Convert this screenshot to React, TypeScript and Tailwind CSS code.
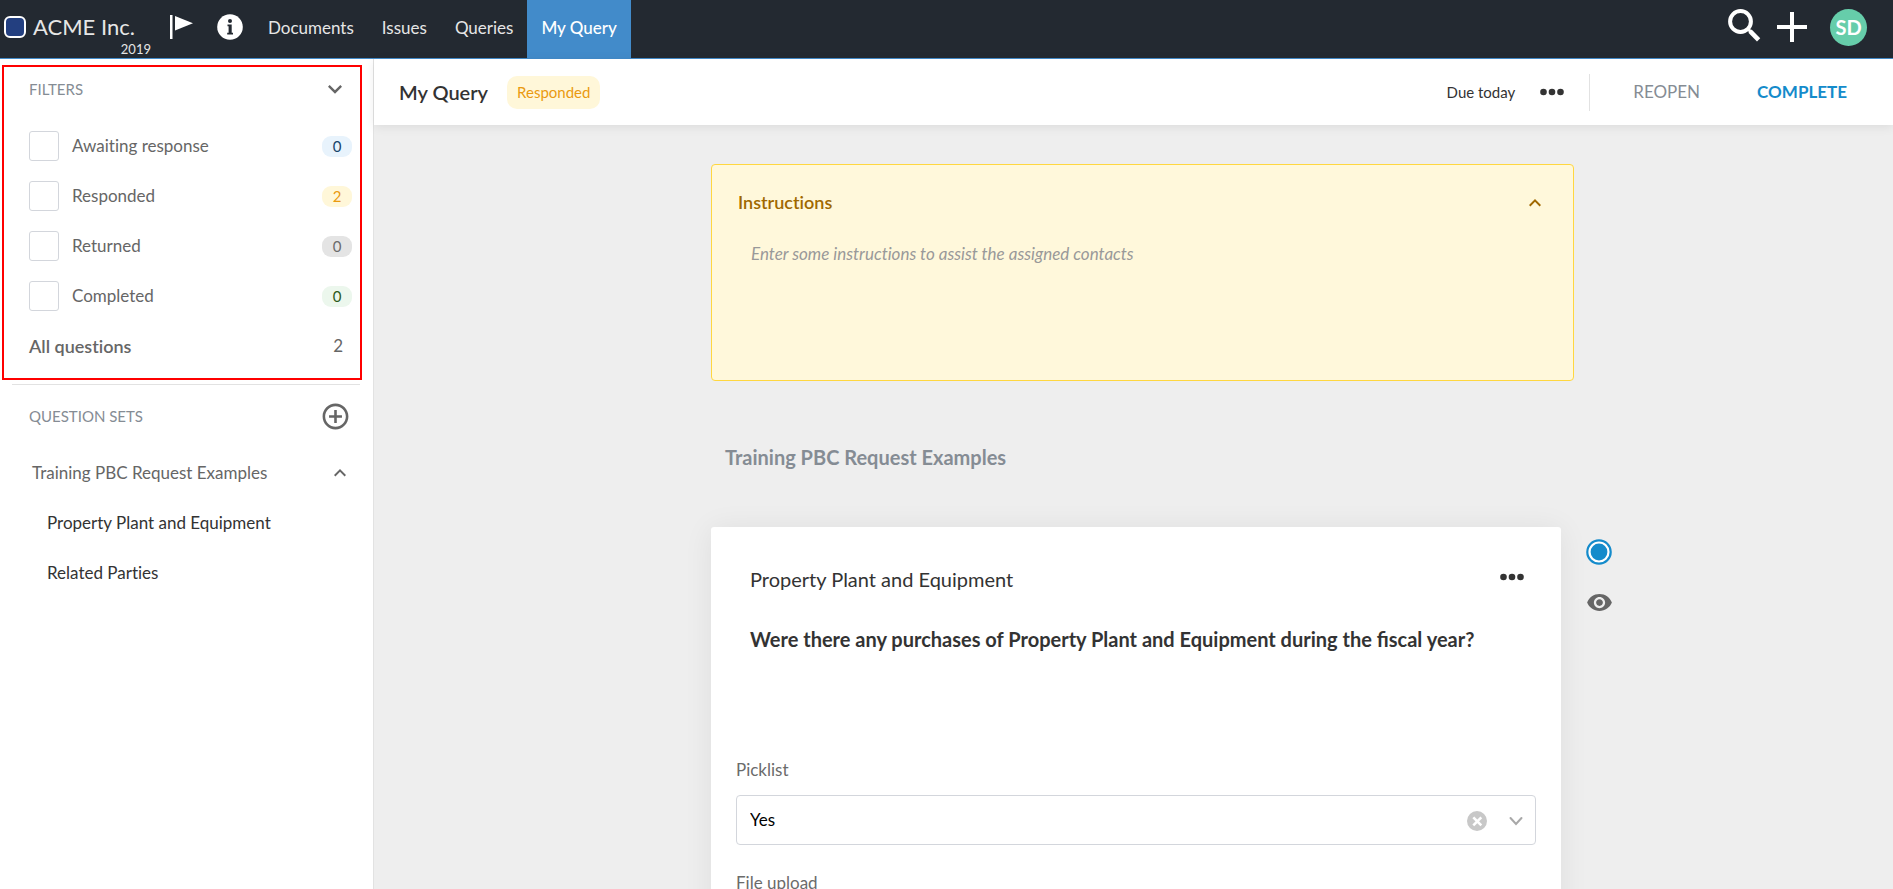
import { useState } from "react";
import {
  MdControlPoint,
  MdExpandLess,
  MdExpandMore,
  MdVisibility,
} from "react-icons/md";

const NAV = ["Documents", "Issues", "Queries", "My Query"];

const FILTERS = [
  { id: "awaiting", label: "Awaiting response", count: 0, badge: "bg-[#e8f3fc] text-[#17456b]" },
  { id: "responded", label: "Responded", count: 2, badge: "bg-[#fff7d9] text-[#ea9a10]" },
  { id: "returned", label: "Returned", count: 0, badge: "bg-[#e4e4e4] text-[#6b6b6b]" },
  { id: "completed", label: "Completed", count: 0, badge: "bg-[#ecf7ed] text-[#2c5a1c]" },
];

const QUESTIONS = ["Property Plant and Equipment", "Related Parties"];

function Dots() {
  return (
    <svg width="24" height="8" viewBox="0 0 24 8" fill="#333" aria-hidden="true">
      <circle cx="3.5" cy="4" r="3.3" />
      <circle cx="12" cy="4" r="3.3" />
      <circle cx="20.5" cy="4" r="3.3" />
    </svg>
  );
}

function TopBar() {
  return (
    <header className="flex h-[59px] shrink-0 items-stretch border-b border-[#428bca] bg-[#232931] text-[#e6e6e6]">
      <a href="#home" className="flex w-[151px] flex-col pt-3 pl-1">
        <span className="flex items-center gap-[7px] text-[22px] leading-[30px]">
          <span className="h-[22px] w-[22px] rounded-[6px] border-2 border-white bg-[#233f80]" />
          ACME Inc.
        </span>
        <span className="self-end text-[13px] leading-[14px]">2019</span>
      </a>
      <button type="button" aria-label="Flag" className="ml-[18px] flex h-[54px] items-center">
        <svg width="25" height="24" viewBox="0 0 25 24" fill="#fff">
          <rect x="1" y="0" width="2.5" height="24" />
          <path d="M6 1L24 8.3L6 15.6Z" />
        </svg>
      </button>
      <button type="button" aria-label="Information" className="ml-[23px] flex h-[54px] items-center">
        <svg width="26" height="26" viewBox="0 0 26 26">
          <circle cx="13" cy="13" r="12.8" fill="#fff" />
          <circle cx="13" cy="7" r="2" fill="#232931" />
          <path d="M10.5 10.5h4.2v8.3h1.3v1.7h-5.8v-1.7h1.4v-6.6h-1.1z" fill="#232931" />
        </svg>
      </button>
      <nav className="ml-[11px] flex text-[17px]">
        {NAV.map((item) => (
          <a
            key={item}
            href="#nav"
            className={
              item === "My Query"
                ? "flex items-center bg-[#428bca] px-[14px] pb-[3px] font-medium text-white"
                : "flex items-center px-[14px] pb-[3px]"
            }
          >
            {item}
          </a>
        ))}
      </nav>
      <div className="ml-auto flex h-[54px] items-center pr-[26px]">
        <button type="button" aria-label="Search" className="pb-[3px]">
          <svg width="33" height="33" viewBox="0 0 33 33" fill="none" stroke="#fff">
            <circle cx="12.5" cy="12.5" r="10.4" strokeWidth="4" />
            <path d="M20 20l3 3" strokeWidth="3" />
            <path d="M22 22.2l8.6 8.6" strokeWidth="4.6" />
          </svg>
        </button>
        <button type="button" aria-label="Add" className="ml-4">
          <svg width="30" height="30" viewBox="0 0 30 30" fill="#fff">
            <path d="M13 0h4v13h13v4H17v13h-4V17H0v-4h13z" />
          </svg>
        </button>
        <button
          type="button"
          className="ml-[23px] h-[37px] w-[37px] rounded-full bg-[#66cdaa] text-[20px] font-bold text-white"
        >
          SD
        </button>
      </div>
    </header>
  );
}

function Sidebar() {
  return (
    <aside className="w-[374px] shrink-0 overflow-hidden border-r border-[#e2e2e2] bg-white text-[17px] text-[#666]">
      <section className="mt-[6px] mr-[11px] ml-[2px] border-2 border-[#f00] pr-2 pb-[7px] pl-[25px]">
        <div className="mb-[10px] flex h-[44px] items-center justify-between pr-[3px]">
          <h2 className="text-[15px] text-[#858c94]">FILTERS</h2>
          <button type="button" aria-label="Collapse filters">
            <MdExpandMore size={28} />
          </button>
        </div>
        {FILTERS.map((f) => (
          <div key={f.id} className="flex h-[50px] items-center">
            <input
              id={f.id}
              type="checkbox"
              className="h-[30px] w-[30px] appearance-none rounded-[3px] border border-[#d3d6dc] bg-white checked:bg-[#428bca]"
            />
            <label htmlFor={f.id} className="ml-[13px] flex-1">
              {f.label}
            </label>
            <span className={`flex h-[21px] w-[30px] items-center justify-center rounded-[9px] text-[15px] ${f.badge}`}>
              {f.count}
            </span>
          </div>
        ))}
        <div className="flex h-[50px] items-center justify-between pr-[9px]">
          <span className="text-[18px] font-semibold">All questions</span>
          <span>2</span>
        </div>
      </section>

      <section className="mt-1 mr-[13px] ml-3 border-t border-[#e2e2e2] pl-[17px]">
        <div className="flex h-[62px] items-center justify-between pr-[9px]">
          <h2 className="text-[15px] text-[#858c94]">QUESTION SETS</h2>
          <button type="button" aria-label="Add question set">
            <MdControlPoint size={31} />
          </button>
        </div>
        <button type="button" className="flex h-[51px] w-full items-center justify-between pr-2 pl-[3px]">
          <span>Training PBC Request Examples</span>
          <MdExpandLess size={24} />
        </button>
        {QUESTIONS.map((q) => (
          <a key={q} href="#question" className="flex h-[50px] items-center pl-[18px] text-[#333]">
            {q}
          </a>
        ))}
      </section>
    </aside>
  );
}

function QueryHeader() {
  return (
    <div className="relative z-10 flex h-[66px] shrink-0 items-center bg-white pr-[46px] pl-[25px] shadow-[0_2px_10px_rgba(0,0,0,0.08)]">
      <h1 className="text-[20px] font-semibold text-[#333]">My Query</h1>
      <span className="ml-[19px] flex h-[33px] items-center rounded-[10px] bg-[#fff7d9] px-[10px] text-[15px] text-[#ea9a10]">
        Responded
      </span>
      <span className="ml-auto text-[15px] text-[#333]">Due today</span>
      <button type="button" aria-label="Query options" className="ml-[25px]">
        <Dots />
      </button>
      <div className="ml-[25px] h-[37px] w-px bg-[#e2e2e2]" />
      <button type="button" className="ml-[43px] text-[17px] text-[#858c94]">
        REOPEN
      </button>
      <button type="button" className="ml-[57px] text-[17px] font-bold text-[#148bcb]">
        COMPLETE
      </button>
    </div>
  );
}

function Instructions() {
  return (
    <section className="mr-[38px] rounded-[4px] border border-[#ffd740] bg-[#fff8db] px-[26px] pt-[21px]">
      <div className="flex h-8 items-center justify-between">
        <label htmlFor="instructions" className="text-[18px] font-semibold text-[#a06800]">
          Instructions
        </label>
        <button type="button" aria-label="Collapse instructions" className="pt-[2px] text-[#a06800]">
          <MdExpandLess size={24} />
        </button>
      </div>
      <textarea
        id="instructions"
        placeholder="Enter some instructions to assist the assigned contacts"
        className="mt-6 block h-[138px] w-full resize-none bg-transparent px-[13px] text-[17px] leading-6 italic outline-none placeholder:text-[#999]"
      />
    </section>
  );
}

function QuestionCard() {
  const [answer, setAnswer] = useState("Yes");
  return (
    <article className="min-w-0 flex-1 rounded-[3px] bg-white px-[25px] pt-9 pb-12 shadow-[0_2px_30px_rgba(0,0,0,0.07)]">
      <div className="flex h-8 items-center justify-between pr-3 pl-[14px]">
        <h3 className="text-[20px] text-[#333]">Property Plant and Equipment</h3>
        <button type="button" aria-label="Question options" className="pb-1">
          <Dots />
        </button>
      </div>
      <p className="mt-7 min-h-[135px] pl-[14px] text-[20px] leading-8 font-bold text-[#333] [font-variant-ligatures:normal]">
        Were there any purchases of Property Plant and Equipment during the fiscal year?
      </p>
      <label htmlFor="picklist" className="block text-[17px] leading-6 text-[#6b6b6b]">
        Picklist
      </label>
      <div className="relative mt-[13px]">
        <select
          id="picklist"
          value={answer}
          onChange={(e) => setAnswer(e.target.value)}
          className="h-[50px] w-full appearance-none rounded-[4px] border border-[#d3d6dc] bg-white px-[13px] text-[17px] text-black"
        >
          <option value="" />
          <option>Yes</option>
          <option>No</option>
        </select>
        <div className="pointer-events-none absolute inset-y-0 right-[13px] flex items-center gap-[22px] pt-[2px]">
          <button
            type="button"
            aria-label="Clear answer"
            onClick={() => setAnswer("")}
            className="pointer-events-auto"
          >
            <svg width="20" height="20" viewBox="0 0 20 20">
              <circle cx="10" cy="10" r="10" fill="#c8c8c8" />
              <path d="M6.3 6.3l8 8M14.3 6.3l-8 8" stroke="#fff" strokeWidth="2.6" />
            </svg>
          </button>
          <svg width="14" height="10" viewBox="0 0 14 10" fill="none" stroke="#a8a8a8" strokeWidth="2">
            <path d="M1.5 2L7 8L12.5 2" strokeLinecap="round" />
          </svg>
        </div>
      </div>
      <label htmlFor="upload" className="mt-[26px] block text-[17px] leading-6 text-[#6b6b6b]">
        File upload
      </label>
      <input id="upload" type="file" className="mt-[10px] block w-full text-[17px]" />
    </article>
  );
}

export default function App() {
  return (
    <div className="flex h-screen flex-col bg-[#eee] font-['Lato',sans-serif] [font-variant-ligatures:none]">
      <TopBar />
      <div className="flex min-h-0 flex-1">
        <Sidebar />
        <div className="flex min-w-0 flex-1 flex-col">
          <QueryHeader />
          <main className="min-h-0 flex-1 overflow-y-auto pt-[39px] pl-14 [scrollbar-width:none]">
            <div className="mx-auto max-w-[901px]">
              <Instructions />
              <h2 className="mt-[60px] mb-[54px] pl-[14px] text-[20px] leading-8 font-bold text-[#858c94]">
                Training PBC Request Examples
              </h2>
              <div className="flex items-start gap-[25px]">
                <QuestionCard />
                <div className="flex w-[26px] shrink-0 flex-col items-center gap-6 pt-3">
                  <button type="button" aria-label="Question status">
                    <svg width="26" height="26" viewBox="0 0 26 26">
                      <circle cx="13" cy="13" r="11.7" fill="#fff" stroke="#148bcb" strokeWidth="2.2" />
                      <circle cx="13" cy="13" r="8.4" fill="#148bcb" />
                    </svg>
                  </button>
                  <button type="button" aria-label="Question visibility" className="text-[#666]">
                    <MdVisibility size={27} />
                  </button>
                </div>
              </div>
            </div>
          </main>
        </div>
      </div>
    </div>
  );
}
